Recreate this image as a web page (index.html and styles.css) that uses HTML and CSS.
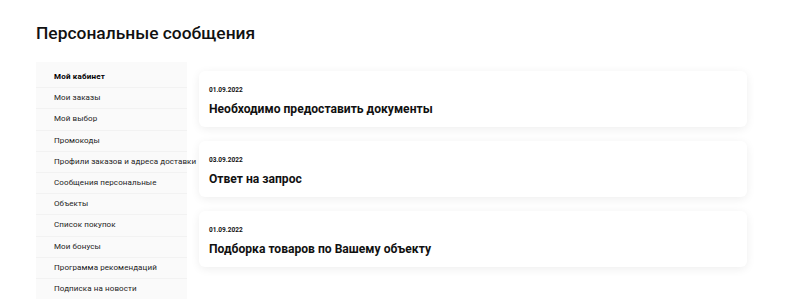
FILE: index.html
```html
<!DOCTYPE html>
<html lang="ru">
<head>
  <meta charset="UTF-8" />
  <title>Персональные сообщения</title>
  <link rel="stylesheet" href="styles.css">
</head>
<body>
  <div class="page">
    <h1 class="page-title">Персональные сообщения</h1>

    <div class="account">
      <ul class="side-menu">
        <li class="active"><a href="#">Мой кабинет</a></li>
        <li><a href="#">Мои заказы</a></li>
        <li><a href="#">Мой выбор</a></li>
        <li><a href="#">Промокоды</a></li>
        <li><a href="#">Профили заказов и адреса доставки</a></li>
        <li><a href="#">Сообщения персональные</a></li>
        <li><a href="#">Объекты</a></li>
        <li><a href="#">Список покупок</a></li>
        <li><a href="#">Мои бонусы</a></li>
        <li><a href="#">Программа рекомендаций</a></li>
        <li><a href="#">Подписка на новости</a></li>
      </ul>

      <div class="messages">
        <div class="msg-card">
          <div class="msg-date">01.09.2022</div>
          <div class="msg-title">Необходимо предоставить документы</div>
        </div>
        <div class="msg-card">
          <div class="msg-date">03.09.2022</div>
          <div class="msg-title">Ответ на запрос</div>
        </div>
        <div class="msg-card">
          <div class="msg-date">01.09.2022</div>
          <div class="msg-title">Подборка товаров по Вашему объекту</div>
        </div>
      </div>
    </div>
  </div>
</body>
</html>
```

FILE: styles.css
```css
body { margin: 0; font-family: Roboto, "Noto Sans", sans-serif; background-color: #fff; color: #111; }

.page {
  padding: 23px 36px 0;
}

.page-title {
  margin: 0;
  font-size: 17.4px;
  font-weight: 500;
  line-height: 20px;
}

.account {
  display: flex;
  align-items: flex-start;
  gap: 12px;
  margin-top: 19px;
}

.side-menu {
  list-style: none;
  margin: 0;
  padding: 5px 0 0 0;
  width: 151px;
  flex-shrink: 0;
  background-color: #fafafa;
}
.side-menu li {
  border-bottom: 1px solid #f2f2f2;
  padding-top: 5px;
  padding-bottom: 5px;
  padding-left: 18px;
  font-size: 8px;
  line-height: 10.2px;
  white-space: nowrap;
}
.side-menu li:last-child { border-bottom: none; }
.side-menu a {
  display: block;
  color: #222;
  text-decoration: none;
  letter-spacing: 0.1px;
}
.side-menu li.active a { font-weight: 700; color: #000; letter-spacing: 0.2px; }

.messages {
  width: 548px;
  display: flex;
  flex-direction: column;
  gap: 14px;
  margin-top: 9px;
}

.msg-card {
  background: white;
  border-radius: 6px;
  height: 56px;
  box-sizing: border-box;
  padding: 15px 10px 0;
  box-shadow: 0 2px 10px rgba(0,0,0,0.07);
}

.msg-date {
  font-size: 6.5px;
  font-weight: 700;
  line-height: 8px;
}
.msg-title {
  margin-top: 8px;
  font-size: 12.1px;
  font-weight: 700;
  line-height: 15px;
}
```
